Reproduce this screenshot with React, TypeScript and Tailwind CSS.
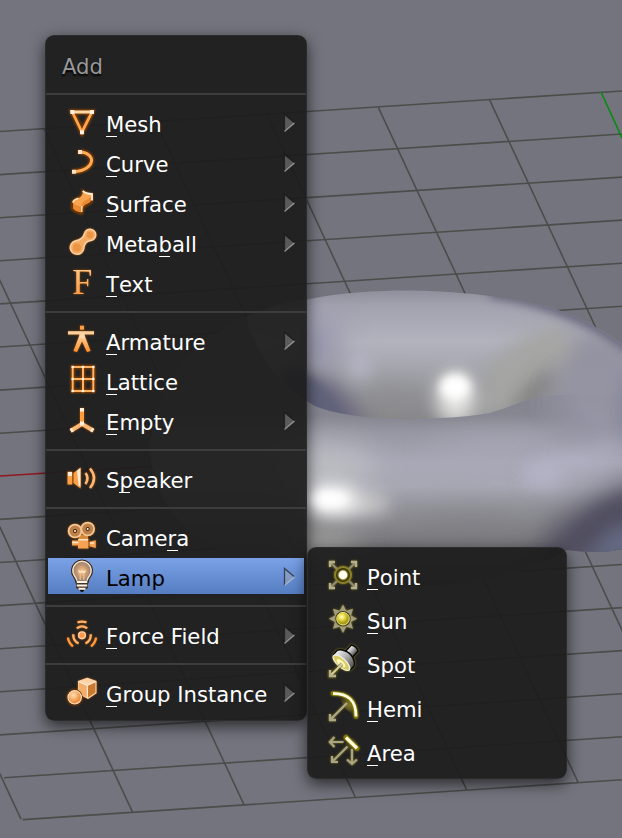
import type { ReactNode } from "react";

const O = "url(#orange)";

function Arc({ r, rotate }: { r: number; rotate: number }) {
  const dx = r * 0.6;
  const dy = r * 0.8;
  return (
    <path
      d={`M${18 - dx} ${19.3 - dy}A${r} ${r} 0 0 1 ${18 + dx} ${19.3 - dy}`}
      transform={`rotate(${rotate} 18 19.3)`}
    />
  );
}

const icons: Record<string, ReactNode> = {
  mesh: (
    <g>
      <path d="M8.3 8H28L18 28Z" fill="none" stroke="#6b3200" strokeWidth="4.6" />
      <path d="M8.3 8H28L18 28Z" fill="none" stroke="#ffa54d" strokeWidth="2.8" />
      <path d="M9 8H27" stroke="#ffd9ae" strokeWidth="2.6" />
      <path d="M6.3 6h4v4h-4zM26 6h4v4h-4zM16 26.2h4v4h-4z" fill="#fff0e0" />
    </g>
  ),
  curve: (
    <g>
      <path d="M16 8C32 8.5 32.5 26 10 27.7" fill="none" stroke="#6b3200" strokeWidth="4.6" />
      <path d="M16 8C32 8.5 32.5 26 10 27.7" fill="none" stroke="#ffab59" strokeWidth="3" />
      <path d="M14 6h4v4h-4zM8 25.7h4v4H8z" fill="#ffe3c6" />
    </g>
  ),
  surface: (
    <g>
      <path d="M18.7 6.5Q22 9.5 28 10V16.5Q27.5 19 23.5 20.5Q18.5 22 18.2 29.5Q11 28.5 8.3 25V18.5Q9 15.5 14 14Q19 12 18.7 6.5Z" fill="#e98a35" stroke="#6b3200" strokeWidth="1.6" />
      <path d="M18.7 7Q22 9.8 28 10Q27.500 13.500 23 15.500Q17.800 17.500 17.500 22.500Q11 21.500 8.600 18.500Q9.500 16 14 14.500Q19.500 12 18.700 7Z" fill="#f9a44e" />
      <path d="M18.7 7Q22 9.8 28 10V16.5" stroke="#fff0dc" strokeWidth="1.8" fill="none" />
      <path d="M8.6 18.500Q10 15.500 14.500 14.300" stroke="#ffe0bd" strokeWidth="1.4" fill="none" />
      <path d="M17.800 22V28" stroke="#ffdcb4" strokeWidth="1.4" fill="none" />
    </g>
  ),
  meta: (
    <g stroke="#f8d1a6" strokeWidth="1.6">
      <path d="M20.5 9.5A5.700 5.700 0 1 1 27 16.5C22 17 20.3 19.500 19.800 24.5A6.800 6.800 0 1 1 11 17C16 16 19.5 14 20.5 9.5Z" fill="#f5ab62" />
      <circle cx="13" cy="23.5" r="4" fill="#e98f3c" stroke="none" opacity=".8" />
      <circle cx="26" cy="11" r="3.2" fill="#e98f3c" stroke="none" opacity=".8" />
    </g>
  ),
  text: (
    <text x="8.2" y="30" fontSize="36" fill={O} fontFamily="'Liberation Serif', serif">F</text>
  ),
  armature: (
    <g>
      <path d="M16 3.7h4v4h-4z" fill="#ff9c45" />
      <path d="M15.5 13H20.5L26.5 29L23 30L18 19.5L13 30L9.5 29Z" fill={O} />
      <path d="M4 9.2H30V12.5H4Z" fill="#ffcf9e" />
      <path d="M15.5 12H20.5V16.5H15.5Z" fill="#ffd6ab" />
    </g>
  ),
  lattice: (
    <g>
      <path d="M8.7 5H29.3V29H8.7ZM19 5V29M8.7 17H29.3" fill="none" stroke="#6b3200" strokeWidth="3.6" />
      <path d="M8.7 5H29.3V29H8.7ZM19 5V29M8.7 17H29.3" fill="none" stroke="#ffb061" strokeWidth="2" />
      {[8.7, 19, 29.3].map((x) =>
        [5, 17, 29].map((y) => <rect key={`${x}-${y}`} x={x - 1.2} y={y - 1.2} width="2.4" height="2.4" fill="#fff1e2" />)
      )}
    </g>
  ),
  empty: (
    <g strokeWidth="4" fill="none">
      <path d="M18 22V6" stroke="#ff9d3d" />
      <path d="M18 22L6.8 28.7M18 22L29 28.5" stroke="#ffb873" />
      <path d="M16 6h4v3.5h-4zM16 19.5h4v4h-4z" fill="#fff0de" stroke="none" />
      <path d="M9 27.4L6.6 28.8M27 27.3L29.4 28.7" stroke="#ffe8d0" />
    </g>
  ),
  speaker: (
    <g>
      <path d="M3.5 11.7H8.3V24.5H3.5ZM9.5 13L16.5 7.5V28.5L9.5 23Z" fill="#ffa047" />
      <path d="M4 12H8V16H4ZM13 10.8L16.5 8V27L14.5 25Z" fill="#fff2e4" opacity=".9" />
      <path d="M21.5 13Q25.5 18 21.5 24M26 8.5Q34 18 26 28" fill="none" stroke="#ffb676" strokeWidth="2.6" />
    </g>
  ),
  camera: (
    <g>
      <path d="M15 17H24V21H15Z" fill="#d88737" />
      <circle cx="11" cy="13" r="6.4" fill="#bd8048" stroke="#f3c797" strokeWidth="1.8" />
      <circle cx="23.7" cy="11" r="6.4" fill="#bd8048" stroke="#f3c797" strokeWidth="1.8" />
      <circle cx="11" cy="13" r="2" fill="#4a2200" /><circle cx="11" cy="13" r="1" fill="#fff" />
      <circle cx="23.7" cy="11" r="2" fill="#4a2200" /><circle cx="23.7" cy="11" r="1" fill="#fff" />
      <path d="M8 22.5H14V20.7H24.5V24L31.8 22.3V30L24.5 28V30.5H14V27.5H8Z" fill="#f7a253" />
      <path d="M8.2 24.5H14.5M26 25H30M14.5 21.7H24" stroke="#ffe6cb" strokeWidth="1.6" />
      <path d="M25 22V29" stroke="#7b4210" strokeWidth="1" />
    </g>
  ),
  lamp: (
    <g>
      <path d="M13 23.5Q12.8 20.5 10.6 18A9.2 9.2 0 1 1 25.4 18Q23.2 20.5 23 23.5Z" fill="url(#bulb)" stroke="#33241c" strokeWidth="3.6" />
      <path d="M13 23.5Q12.8 20.5 10.6 18A9.2 9.2 0 1 1 25.4 18Q23.2 20.5 23 23.5Z" fill="url(#bulb)" stroke="#fce1c6" strokeWidth="1.5" />
      <path d="M14.5 12.5L16.2 14.5L18 13.2L19.8 14.5L21.5 12.5" fill="none" stroke="#ffe7cf" strokeWidth="1.5" />
      <path d="M16.2 15V22M19.8 15V22" fill="none" stroke="#f0bf90" strokeWidth="1.2" />
      <path d="M12 22.7H24V30L21 32H15L12 30Z" fill="#43352c" />
      <path d="M12.8 24H23.2M12.8 27.5H23.2M14.5 30.8H21.5" stroke="#fff3e5" strokeWidth="2.1" />
      <path d="M16 32H20V33L18 34.3L16 33Z" fill="#111" />
    </g>
  ),
  force: (
    <g fill="none" stroke="#ffb06b" strokeWidth="2.4">
      <circle cx="18" cy="19.3" r="3.4" fill="#ff974b" stroke="#ffd0ac" strokeWidth="1.4" />
      {[0, 120, 240].map((a) => <Arc key={a} r={8.7} rotate={a} />)}
      <path d="M13.5 6.3Q18 4.9 22.5 6.3" />
      <path d="M13 5.9Q18 4 23 5.9" transform="rotate(120 18 19.3)" stroke="#ff9a42" />
      <path d="M13 5.9Q18 4 23 5.9" transform="rotate(240 18 19.3)" stroke="#ff9a42" />
    </g>
  ),
  group: (
    <g>
      <path d="M23.3 4.3L32 7.5V19L24 24.3L14.5 19.5V7.5Z" fill="#c97a30" stroke="#ffd9b1" strokeWidth="1.1" />
      <path d="M23.3 4.3L32 7.5L23.3 11.5L14.5 7.5Z" fill="#ffd3a5" />
      <path d="M14.5 7.5L23.3 11.5L24 24.3L14.5 19.5Z" fill="#f5ae6a" />
      <path d="M23.3 11.5V24M14.5 7.5L23.3 11.5L32 7.5" stroke="#fff0df" strokeWidth="1.1" fill="none" />
      <circle cx="10.7" cy="23.3" r="8" fill="#4a2400" />
      <circle cx="10.7" cy="23.3" r="6.7" fill="url(#ball)" stroke="#ffdcb9" strokeWidth="1.2" />
    </g>
  ),
  point: (
    <g>
      <path d="M5 5L31 31M31 5L5 31" stroke="#8e8a75" strokeWidth="2.2" />
      <path d="M5 10V5H10M26 5H31V10M31 26V31H26M10 31H5V26" fill="none" stroke="#b5b08f" strokeWidth="2.3" />
      <circle cx="18" cy="18" r="8" fill="#3b360d" stroke="#8b822a" strokeWidth="2" />
      <circle cx="18" cy="18" r="5.5" fill="#7f7325" />
      <circle cx="18" cy="18" r="4.4" fill="#fffef0" />
    </g>
  ),
  sun: (
    <g>
      <path d="M18 3.5L21.3 9.7L28 7.7L26 14.4L32.2 17.7L26 21L28 27.7L21.3 25.7L18 31.9L14.7 25.7L8 27.7L10 21L3.8 17.7L10 14.4L8 7.7L14.7 9.7Z" fill="#a29d80" />
      <circle cx="18" cy="17.7" r="7.7" fill="#423d0b" />
      <circle cx="18" cy="17.7" r="6.3" fill="url(#sunball)" stroke="#eee487" strokeWidth="1" />
    </g>
  ),
  spot: (
    <g>
      <g transform="rotate(42 18 16)">
        <path d="M13.500 -1.5Q18 -4 22.500 -1.5V7H13.500Z" fill="url(#metal)" stroke="#090909" strokeWidth="1.4" />
        <path d="M6.5 17.5V12.5Q7 9.5 13 7Q18 5 23 7Q29 9.5 29.5 12.5V17.5Q24 22 18 22T6.5 17.5Z" fill="url(#metal)" stroke="#090909" strokeWidth="1.4" />
        <ellipse cx="18" cy="18.3" rx="10.6" ry="4.3" fill="#d9cc62" stroke="#f1f1ea" strokeWidth="1.2" />
        <ellipse cx="18" cy="19" rx="5.5" ry="2.4" fill="#fff8b7" />
      </g>
      <path d="M17 19L5 31M5 25V31H11" fill="none" stroke="#4b450e" strokeWidth="4" opacity=".5" />
      <path d="M17.5 18.5L5 31" fill="none" stroke="#d3cda2" strokeWidth="2.2" />
      <path d="M5 25V31H11" fill="none" stroke="#b5b08f" strokeWidth="2.3" />
    </g>
  ),
  hemi: (
    <g fill="none">
      <path d="M8 4.5Q30 5 31 27.5L21 20L16 12Z" fill="url(#hemiglow)" />
      <path d="M8 4.5C23 4.5 31 11 31 27.5" stroke="#857805" strokeWidth="4.6" strokeLinecap="round" />
      <path d="M8 4.5C23 4.5 31 11 31 27.5" stroke="#fffce0" strokeWidth="2.8" />
      <path d="M22 14L5 31M5 25V31H11" stroke="#aca789" strokeWidth="2.3" />
    </g>
  ),
  area: (
    <g fill="none">
      <circle cx="24" cy="12" r="8" fill="url(#hemiglow)" opacity=".5" />
      <path d="M18.5 9H5M9.5 4L4.8 9L9.5 14M22.5 13.5L7 29M7 23V29H13M27 16V31M22 26.5L27 31L32 26.5" stroke="#a8a485" strokeWidth="2.2" />
      <path d="M21 4.5L32 15.3" stroke="#857805" strokeWidth="5" strokeLinecap="round" />
      <path d="M21 4.5L32 15.3" stroke="#fffbd9" strokeWidth="3.3" />
    </g>
  ),
};

function Icon({ name, tone }: { name: string; tone: string }) {
  return (
    <svg width="36" height="36" viewBox="0 0 36 36" className={`shrink-0 overflow-visible ${tone}`}>
      {icons[name]}
    </svg>
  );
}

function Label({ text, hot }: { text: string; hot: number }) {
  if (hot < 0) return <span>{text}</span>;
  return (
    <span className="whitespace-pre">
      {text.slice(0, hot)}
      <span className="relative">
        {text[hot]}
        <span className="absolute left-0 bottom-0 h-px w-[11px] bg-white" />
      </span>
      {text.slice(hot + 1)}
    </span>
  );
}

function Arrow() {
  return (
    <svg width="13" height="20" viewBox="0 0 13 20" className="ml-auto mr-2 mt-px shrink-0">
      <path d="M1.5 1.5L11.5 10L1.5 18.5Z" fill="#b0b0b0" fillOpacity=".4" />
      <path d="M1.5 18.5V1.5L11 9.5" fill="none" stroke="#141414" strokeOpacity=".65" strokeWidth="1.3" />
      <path d="M1.5 18.5L11.5 10" stroke="#cfcfcf" strokeOpacity=".55" strokeWidth="1.5" />
    </svg>
  );
}

type Entry = [icon: string, text: string, hot: number, sub: boolean];

const groups: Entry[][] = [
  [
    ["mesh", "Mesh", 0, true],
    ["curve", "Curve", 0, true],
    ["surface", "Surface", 0, true],
    ["meta", "Metaball", 4, true],
    ["text", "Text", 0, false],
  ],
  [
    ["armature", "Armature", 0, true],
    ["lattice", "Lattice", 0, false],
    ["empty", "Empty", 0, true],
  ],
  [["speaker", "Speaker", 1, false]],
  [
    ["camera", "Camera", 4, false],
    ["lamp", "Lamp", -1, true],
  ],
  [["force", "Force Field", 0, true]],
  [["group", "Group Instance", 0, true]],
];

const lamps: Entry[] = [
  ["point", "Point", 0, false],
  ["sun", "Sun", 0, false],
  ["spot", "Spot", 2, false],
  ["hemi", "Hemi", 0, false],
  ["area", "Area", 0, false],
];

function Viewport() {
  const rows = Array.from({ length: 17 }, (_, k) => k).filter((k) => k !== 8);
  const cols = Array.from({ length: 12 }, (_, k) => k - 3).filter((k) => k !== 5);
  return (
    <svg className="absolute inset-0" width="622" height="838" viewBox="0 0 622 838">
      <defs>
        <linearGradient id="orange" x1="0" y1="0" x2="0" y2="1"><stop stopColor="#ffd09a" /><stop offset="1" stopColor="#ff9132" /></linearGradient>
        <radialGradient id="bulb"><stop stopColor="#ffc78d" /><stop offset=".6" stopColor="#c39770" /><stop offset="1" stopColor="#8c8178" /></radialGradient>
        <radialGradient id="ball" cx=".4" cy=".35"><stop stopColor="#ffe0b9" /><stop offset="1" stopColor="#ee9140" /></radialGradient>
        <radialGradient id="sunball" cx=".4" cy=".35"><stop stopColor="#fffde0" /><stop offset=".4" stopColor="#f3e552" /><stop offset="1" stopColor="#a99c18" /></radialGradient>
        <linearGradient id="metal"><stop stopColor="#f2f2f2" /><stop offset=".45" stopColor="#b4b4b4" /><stop offset="1" stopColor="#4c4c4c" /></linearGradient>
        <radialGradient id="hemiglow" cx=".7" cy=".5"><stop stopColor="#9a8d38" stopOpacity=".6" /><stop offset="1" stopColor="#6a6020" stopOpacity="0" /></radialGradient>
        <linearGradient id="back" gradientUnits="userSpaceOnUse" x1="0" y1="290" x2="0" y2="420">
          <stop stopColor="#8f8f9c" /><stop offset=".12" stopColor="#a2a2af" /><stop offset=".4" stopColor="#b2b3bd" /><stop offset=".62" stopColor="#a4a5ac" /><stop offset="1" stopColor="#868689" />
        </linearGradient>
        <linearGradient id="front" gradientUnits="userSpaceOnUse" x1="0" y1="415" x2="0" y2="585">
          <stop stopColor="#858590" /><stop offset=".1" stopColor="#9797a3" /><stop offset=".28" stopColor="#a9a9b7" /><stop offset=".42" stopColor="#a8a8b4" /><stop offset=".55" stopColor="#929299" /><stop offset=".8" stopColor="#747476" /><stop offset="1" stopColor="#5c5c5e" />
        </linearGradient>
        <linearGradient id="sideTone" x1="0" y1="0" x2="0" y2="1"><stop stopColor="#9493a0" /><stop offset=".5" stopColor="#9594a3" /><stop offset="1" stopColor="#9d9cad" /></linearGradient>
        <radialGradient id="sideFade"><stop stopColor="#fff" /><stop offset=".35" stopColor="#fff" /><stop offset="1" stopColor="#000" /></radialGradient>
        <mask id="side" maskUnits="userSpaceOnUse" x="510" y="320" width="130" height="160"><ellipse cx="610" cy="398" rx="85" ry="64" fill="url(#sideFade)" /></mask>
        <filter id="b4" x="-80%" y="-90%" width="260%" height="280%" colorInterpolationFilters="sRGB"><feGaussianBlur stdDeviation="5" /></filter>
        <filter id="b7" x="-120%" y="-150%" width="340%" height="400%" colorInterpolationFilters="sRGB"><feGaussianBlur stdDeviation="9" /></filter>
        <filter id="b14" x="-120%" y="-200%" width="340%" height="500%" colorInterpolationFilters="sRGB"><feGaussianBlur stdDeviation="15" /></filter>
        <clipPath id="torus"><path d="M150 450C155 350 250 305 310 299C340 293 375 290.6 410 290.6C455 291 500 296 540 305C575 313 605 330 640 358V545Q605 556 567 550C500 590 400 592 330 580C230 570 155 530 150 450Z" /></clipPath>
        <clipPath id="frontclip"><path d="M140 280H240Q245 350 290 388Q310 405 320 408C350 418 390 420 420 419C450 418 475 416 490 413C512 407 522 400 540 396.5Q590 392 640 396V600H140Z" /></clipPath>
        <clipPath id="backclip"><path d="M238 280H640V397Q590 393 540 397.5C522 401 512 408 490 414C475 417 450 419 420 420C390 421 350 419 320 409Q310 406 288 389Q245 350 238 280Z" /></clipPath>
      </defs>
      <g stroke="#4b4d4b" strokeWidth="1.6">
        {rows.map((k) => {
          const x = k === 16 ? 22.6 : k === 15 ? 4 : 0;
          return <line key={k} x1={x} y1={131.5 + 43.1 * k - x * 0.065} x2="622" y2={91 + 43.05 * k} />;
        })}
        {cols.map((k) => (
          <line key={k} x1={44.4 + 111.3 * k} y1={129.5 - 7.4 * k} x2={355.2 + 111.4 * k} y2={797 - 7.4 * k} />
        ))}
      </g>
      <path d="M0 476L152 466.5" stroke="#90181e" strokeWidth="1.6" />
      <path d="M601 92L622 138" stroke="#078b12" strokeWidth="1.6" />
      <g clipPath="url(#torus)">
        <rect x="140" y="280" width="500" height="320" fill="url(#back)" />
        <g clipPath="url(#backclip)">
          <ellipse cx="600" cy="362" rx="50" ry="34" fill="#9493a1" filter="url(#b14)" />
          <ellipse cx="318" cy="345" rx="20" ry="26" fill="#9090a8" filter="url(#b14)" />
          <ellipse cx="395" cy="402" rx="38" ry="12" fill="#8b8b8d" filter="url(#b14)" />
          <path d="M474 425L490 366Q515 335 560 325L575 350L545 400Z" fill="#a5a5a4" filter="url(#b7)" />
          <path d="M508 416Q520 388 550 370Q564 382 548 398Z" fill="#767673" opacity=".85" filter="url(#b7)" />
          <path d="M290 376Q325 370 342 388L372 425H290Z" fill="#6e6b80" filter="url(#b7)" />
          <path d="M285 368Q325 376 350 422L285 420Z" fill="#60627a" filter="url(#b4)" />
          <ellipse cx="360" cy="366" rx="9" ry="13" fill="#bbb9ce" filter="url(#b7)" />
          <ellipse cx="456" cy="398" rx="20" ry="26" fill="#e2e2e0" filter="url(#b7)" />
          <ellipse cx="455" cy="387" rx="15" ry="13" fill="#fff" filter="url(#b4)" />
        </g>
        <g clipPath="url(#frontclip)">
          <rect x="140" y="280" width="500" height="320" fill="url(#front)" />
          <ellipse cx="325" cy="468" rx="50" ry="24" fill="#bcbdc2" filter="url(#b14)" />
          <ellipse cx="325" cy="545" rx="34" ry="20" fill="#9c9c9b" filter="url(#b14)" />
          <ellipse cx="500" cy="450" rx="70" ry="18" fill="#a8a8b7" opacity=".7" filter="url(#b14)" />
          <ellipse cx="470" cy="530" rx="60" ry="14" fill="#7a7a80" opacity=".5" filter="url(#b14)" />
          <path d="M650 474L600 496L555 524L530 575H650Z" fill="#565465" filter="url(#b14)" />
          <path d="M660 482L600 508L550 550H660Z" fill="#504e5f" filter="url(#b7)" />
          <path d="M660 516L610 528L582 562H660Z" fill="#646982" filter="url(#b7)" />
          <path d="M525 475Q570 463 635 438" fill="none" stroke="#b5b3c8" strokeWidth="20" opacity=".75" filter="url(#b7)" />
          <ellipse cx="543" cy="476" rx="20" ry="11" fill="#b8b6ca" opacity=".65" filter="url(#b7)" />
          <ellipse cx="350" cy="504" rx="40" ry="12" fill="#cfcfd0" filter="url(#b7)" />
          <ellipse cx="331" cy="499" rx="26" ry="13" fill="#fff" filter="url(#b7)" />
          <ellipse cx="329" cy="499" rx="18" ry="7" fill="#fff" filter="url(#b4)" />
        </g>
        <rect x="510" y="320" width="130" height="160" fill="url(#sideTone)" opacity=".95" mask="url(#side)" />
        <ellipse cx="632" cy="412" rx="12" ry="38" fill="#7a7e97" opacity=".7" filter="url(#b7)" />
        <path d="M490 291C555 302 605 325 645 358" fill="none" stroke="#58556c" strokeWidth="12" opacity=".8" filter="url(#b4)" />
      </g>
    </svg>
  );
}

const panel =
  "rounded-[9px] border border-[#303033]/80 bg-[#1c1c1c]/[0.93] shadow-[0_5px_15px_rgba(0,0,0,0.65)]";

export default function App() {
  return (
    <main className="relative h-[838px] w-[622px] overflow-hidden bg-[#74747e] pl-[45px] pt-[35px] font-['DejaVu_Sans',sans-serif] text-[21.2px] leading-6 text-white">
      <Viewport />
      <nav className={`relative flex h-[686px] w-[262px] flex-col ${panel}`}>
        <h1 className="h-[57px] pl-4 pt-[19px] text-[#999] [text-shadow:0_2px_2px_#000]">Add</h1>
        {groups.map((items, i) => (
          <section key={i} className={`flex flex-col gap-1 border-t-2 border-[#3d3d3d] pt-[9px] ${i < 5 ? "pb-[11px]" : ""}`}>
            {items.map(([icon, text, hot, sub]) => (
              <div
                key={text}
                className={`mx-0.5 flex h-9 items-center pl-4 ${text === "Lamp" ? "bg-linear-to-b from-[#7ba2e7] to-[#557dc1] text-black" : ""}`}
              >
                <Icon name={icon} tone={text === "Lamp" ? "" : "drop-shadow-[0_0_1px_#a05000]"} />
                <div className="ml-1.5 pt-1.5"><Label text={text} hot={hot} /></div>
                {sub && <Arrow />}
              </div>
            ))}
          </section>
        ))}
      </nav>
      <nav className={`absolute left-[307px] top-[547px] flex h-[232px] w-[260px] flex-col gap-2 pt-[9px] ${panel}`}>
        {lamps.map(([icon, text, hot]) => (
          <div key={text} className="flex h-9 items-center pl-[17px]">
            <Icon name={icon} tone="drop-shadow-[0_0_1px_#8a7e10]" />
            <div className="ml-1.5 pt-1.5"><Label text={text} hot={hot} /></div>
          </div>
        ))}
      </nav>
    </main>
  );
}
